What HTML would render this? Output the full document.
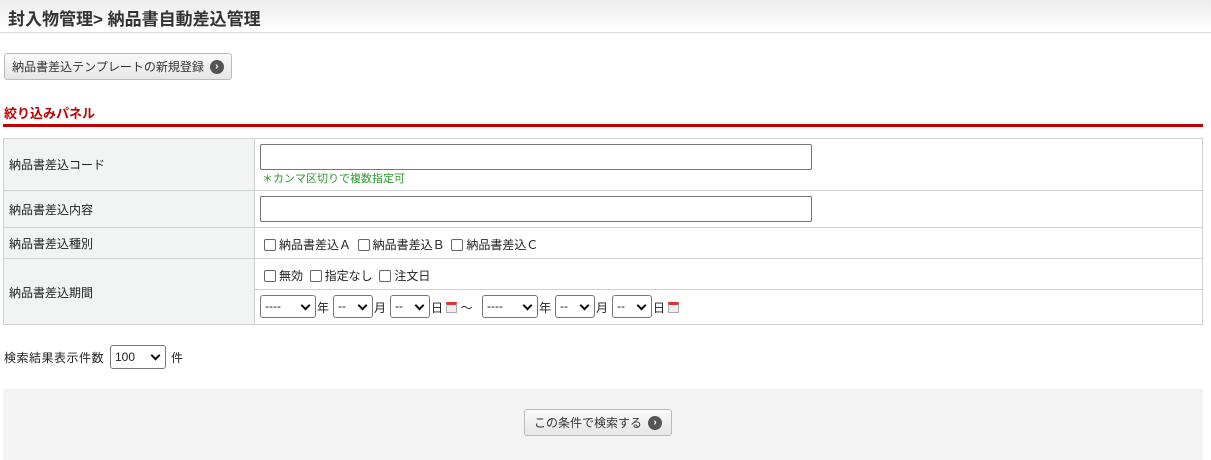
<!DOCTYPE html>
<html><head><meta charset="utf-8"><style>
*{box-sizing:border-box;margin:0;padding:0}
body{width:1211px;height:460px;overflow:hidden;background:#fff;font-family:"Liberation Sans","Noto Sans CJK JP",sans-serif;font-size:12px;color:#222;position:relative}
.a{position:absolute;white-space:nowrap}
.hdr{left:0;top:0;width:1211px;height:33px;background:linear-gradient(#ececec,#fff);border-bottom:1px solid #d8d8de}
.hdr span{position:absolute;left:8px;top:5px;font-size:17px;font-weight:bold;color:#333}
.btn{border:1px solid #bbb;border-radius:3px;background:linear-gradient(#fafafa,#e6e6e6);font-size:12px;color:#333;display:flex;align-items:center;justify-content:center;gap:6px}
.ic{width:14px;height:14px;border-radius:50%;background:#555;color:#fff;font-size:10px;line-height:14px;text-align:center;font-weight:bold}
.lbl{background:#f2f3f3;border:1px solid #d0d0d0}
.cell{border:1px solid #d0d0d0}
.inp{border:1px solid #777;border-radius:2px;background:#fff}
.sel{border:1px solid #777;border-radius:3px;background:#fff;font-size:12px;padding-left:4px;line-height:20px}
.sel:after{content:"";position:absolute;right:6px;top:6px;width:5px;height:5px;border-right:2px solid #111;border-bottom:2px solid #111;transform:rotate(45deg)}
.cb{display:inline-block;width:12px;height:12px;border:1px solid #666;border-radius:2px;vertical-align:-2px;margin-right:3px;background:#fff}
.cal{display:inline-block;width:11px;height:11px;border:1px solid #aaa;border-top:3px solid #d33;background:#eee;vertical-align:-1px}
</style></head><body>
<div class="a hdr"><span>封入物管理&gt; 納品書自動差込管理</span></div>
<div class="a btn" style="left:4px;top:53px;width:228px;height:27px">納品書差込テンプレートの新規登録<span class="ic">›</span></div>
<div class="a" style="left:4px;top:103px;color:#c00000;font-size:13px;font-weight:bold">絞り込みパネル</div>
<div class="a" style="left:3px;top:124px;width:1200px;height:3px;background:#c00000"></div>

<div class="a lbl" style="left:3px;top:138px;width:252px;height:53px"></div>
<div class="a cell" style="left:254px;top:138px;width:949px;height:53px"></div>
<div class="a lbl" style="left:3px;top:190px;width:252px;height:38px"></div>
<div class="a cell" style="left:254px;top:190px;width:949px;height:38px"></div>
<div class="a lbl" style="left:3px;top:227px;width:252px;height:32px"></div>
<div class="a cell" style="left:254px;top:227px;width:949px;height:32px"></div>
<div class="a lbl" style="left:3px;top:258px;width:252px;height:67px"></div>
<div class="a cell" style="left:254px;top:258px;width:949px;height:32px"></div>
<div class="a cell" style="left:254px;top:289px;width:949px;height:36px"></div>

<div class="a" style="left:9px;top:156px">納品書差込コード</div>
<div class="a" style="left:9px;top:201px">納品書差込内容</div>
<div class="a" style="left:9px;top:235px">納品書差込種別</div>
<div class="a" style="left:9px;top:284px">納品書差込期間</div>

<div class="a inp" style="left:260px;top:144px;width:552px;height:26px"></div>
<div class="a" style="left:262px;top:170px;color:#2a9a2a;font-size:11px">＊カンマ区切りで複数指定可</div>
<div class="a inp" style="left:260px;top:196px;width:552px;height:26px"></div>
<div class="a" style="left:264px;top:236px"><span class="cb"></span>納品書差込Ａ&nbsp; <span class="cb"></span>納品書差込Ｂ&nbsp; <span class="cb"></span>納品書差込Ｃ</div>
<div class="a" style="left:264px;top:267px"><span class="cb"></span>無効&nbsp; <span class="cb"></span>指定なし&nbsp; <span class="cb"></span>注文日</div>

<div class="a sel" style="left:260px;top:295px;width:56px;height:23px">----</div>
<div class="a" style="left:317px;top:299px">年</div>
<div class="a sel" style="left:333px;top:295px;width:40px;height:23px">--</div>
<div class="a" style="left:374px;top:299px">月</div>
<div class="a sel" style="left:390px;top:295px;width:40px;height:23px">--</div>
<div class="a" style="left:431px;top:299px">日 <span class="cal"></span> ～</div>
<div class="a sel" style="left:482px;top:295px;width:56px;height:23px">----</div>
<div class="a" style="left:539px;top:299px">年</div>
<div class="a sel" style="left:555px;top:295px;width:40px;height:23px">--</div>
<div class="a" style="left:596px;top:299px">月</div>
<div class="a sel" style="left:612px;top:295px;width:40px;height:23px">--</div>
<div class="a" style="left:653px;top:299px">日 <span class="cal"></span></div>

<div class="a" style="left:4px;top:349px;letter-spacing:0.5px">検索結果表示件数</div>
<div class="a sel" style="left:110px;top:345px;width:56px;height:24px;line-height:22px">100</div>
<div class="a" style="left:171px;top:349px">件</div>

<div class="a" style="left:3px;top:389px;width:1200px;height:71px;background:#f3f3f3"></div>
<div class="a btn" style="left:524px;top:409px;width:148px;height:27px">この条件で検索する<span class="ic">›</span></div>
</body></html>
